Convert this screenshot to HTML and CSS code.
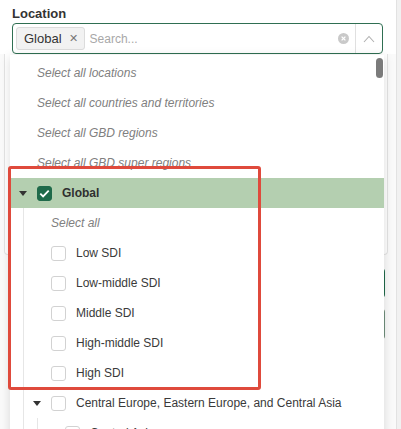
FILE: index.html
```html
<!DOCTYPE html>
<html>
<head>
<title>Location filter</title>
<link rel="stylesheet" href="styles.css">
</head>
<body>

<div class="page">
  <div class="field">
    <label class="field-label">Location</label>
    <div class="select">
      <div class="select-value">
        <span class="chip">Global <span class="chip-x">&#x2715;</span></span>
        <span class="placeholder">Search...</span>
      </div>
      <span class="clear">
        <svg width="11" height="11" viewBox="0 0 11 11"><circle cx="5.5" cy="5.5" r="5.5" fill="#c9c9c9"/><path d="M3.6 3.6l3.8 3.8M7.4 3.6l-3.8 3.8" stroke="#fff" stroke-width="1.3"/></svg>
      </span>
      <span class="select-toggle">
        <svg width="12" height="8" viewBox="0 0 12 8"><path d="M1 7l5-5.5L11 7" fill="none" stroke="#b0b0b0" stroke-width="1.1"/></svg>
      </span>
    </div>

    <div class="menu">
      <div class="scroll-thumb"></div>
      <div class="row all"><span class="all-text">Select all locations</span></div>
      <div class="row all"><span class="all-text">Select all countries and territories</span></div>
      <div class="row all"><span class="all-text">Select all GBD regions</span></div>
      <div class="row all"><span class="all-text">Select all GBD super regions</span></div>

      <div class="row selected">
        <span class="toggle"></span>
        <span class="box checked">
          <svg width="11" height="9" viewBox="0 0 11 9"><path d="M1.3 4.6l2.8 2.8L9.7 1.6" fill="none" stroke="#fff" stroke-width="1.8"/></svg>
        </span>
        <span class="text bold">Global</span>
      </div>
      <div class="children">
        <div class="row all"><span class="all-text sub">Select all</span></div>
        <div class="row"><span class="toggle empty"></span><span class="box"></span><span class="text">Low SDI</span></div>
        <div class="row"><span class="toggle empty"></span><span class="box"></span><span class="text">Low-middle SDI</span></div>
        <div class="row"><span class="toggle empty"></span><span class="box"></span><span class="text">Middle SDI</span></div>
        <div class="row"><span class="toggle empty"></span><span class="box"></span><span class="text">High-middle SDI</span></div>
        <div class="row"><span class="toggle empty"></span><span class="box"></span><span class="text">High SDI</span></div>
        <div class="row"><span class="toggle"></span><span class="box"></span><span class="text">Central Europe, Eastern Europe, and Central Asia</span></div>
        <div class="children">
          <div class="row"><span class="toggle"></span><span class="box"></span><span class="text">Central Asia</span></div>
        </div>
      </div>
    </div>
  </div>

  <div class="card"></div>
  <div class="btn btn-primary"></div>
  <div class="btn btn-secondary"></div>

  <div class="highlight"></div>
</div>

</body>
</html>
```

FILE: styles.css
```css
body {
  margin: 0;
  font-family: "Liberation Sans", Arial, sans-serif;
  background-color: #f1f1f1;
  color: #333;
}

.page {
  position: relative;
  width: 397px;
  height: 429px;
  overflow: hidden;
  background-color: #fafafa;
  border-right: 1px solid #e2e2e2;
  box-sizing: border-box;
}

.field {
  position: relative;
  padding: 6px 13px 0 12px;
  background-color: #fff;
}

.field-label {
  display: block;
  font-size: 13px;
  font-weight: bold;
  color: #333;
  height: 17px;
}

.select {
  display: flex;
  align-items: center;
  height: 31px;
  border: 1px solid #2f6f52;
  border-radius: 4px;
  box-sizing: border-box;
  background-color: #fff;
}

.select-value {
  flex: 1;
  display: flex;
  align-items: center;
  padding-left: 3px;
}

.chip {
  display: inline-flex;
  align-items: center;
  height: 23px;
  padding: 0 6px 0 7px;
  font-size: 13px;
  color: #333;
  background-color: #f2f2f2;
  border: 1px solid #dcdcdc;
  border-radius: 3px;
  box-sizing: border-box;
}

.chip-x {
  margin-left: 7px;
  font-size: 11px;
  color: #777;
}

.placeholder {
  margin-left: 5px;
  font-size: 12px;
  color: #a8a8a8;
}

.clear {
  display: flex;
  margin-right: 6px;
}

.select-toggle {
  display: flex;
  align-items: center;
  justify-content: center;
  width: 26px;
  height: 100%;
  border-left: 1px solid #e0e0e0;
}

/* dropdown list, drawn over the form */
.menu {
  position: absolute;
  top: 55px;
  left: 10px;
  width: 374px;
  height: 380px;
  padding-top: 3px;
  background-color: #fff;
  box-shadow: 0 2px 10px rgba(0, 0, 0, 0.14);
  overflow: hidden;
  z-index: 2;
}

.scroll-thumb {
  position: absolute;
  top: 3px;
  right: 1px;
  width: 7px;
  height: 20px;
  border-radius: 4px;
  background-color: #7b7b7b;
}

.row {
  display: flex;
  align-items: center;
  height: 30px;
  padding-left: 8px;
  font-size: 12px;
}

.row.selected {
  background-color: #b4cfb0;
}

.all-text {
  margin-left: 19px;
  font-style: italic;
  color: #808080;
}

.toggle {
  width: 10px;
  height: 10px;
  position: relative;
}

.toggle::after {
  content: "";
  position: absolute;
  top: 3px;
  left: 1px;
  border-left: 4px solid transparent;
  border-right: 4px solid transparent;
  border-top: 5px solid #333;
}

.toggle.empty::after {
  display: none;
}

.box {
  display: flex;
  align-items: center;
  justify-content: center;
  width: 15px;
  height: 15px;
  margin-left: 9px;
  border: 1px solid #d2d2d2;
  border-radius: 3px;
  box-sizing: border-box;
  background-color: #fff;
}

.box.checked {
  background-color: #1f6a4a;
  border-color: #1f6a4a;
}

.text {
  margin-left: 10px;
  color: #3a3a3a;
  white-space: nowrap;
}

.text.bold {
  font-weight: bold;
  color: #2f2f2f;
}

.children {
  margin-left: 13px;
  border-left: 1px solid #e6e6e6;
}

/* form behind the dropdown */
.card {
  margin: 0 8px 0 4px;
  height: 200px;
  border: 1px solid #e4e4e4;
  border-top: none;
  border-radius: 0 0 4px 4px;
  background-color: #fff;
}

.btn {
  height: 30px;
  margin: 13px 11px 0 10px;
  border-radius: 4px;
}

.btn-primary {
  background-color: #1f6a4a;
}

.btn-secondary {
  margin-top: 10px;
  background-color: #9c8a6a;
  border: 1px solid #6f8f7c;
}

/* annotation frame */
.highlight {
  position: absolute;
  top: 166px;
  left: 8px;
  width: 253px;
  height: 224px;
  border: 3px solid #df4a3c;
  border-radius: 3px;
  box-sizing: border-box;
  z-index: 3;
}
```
